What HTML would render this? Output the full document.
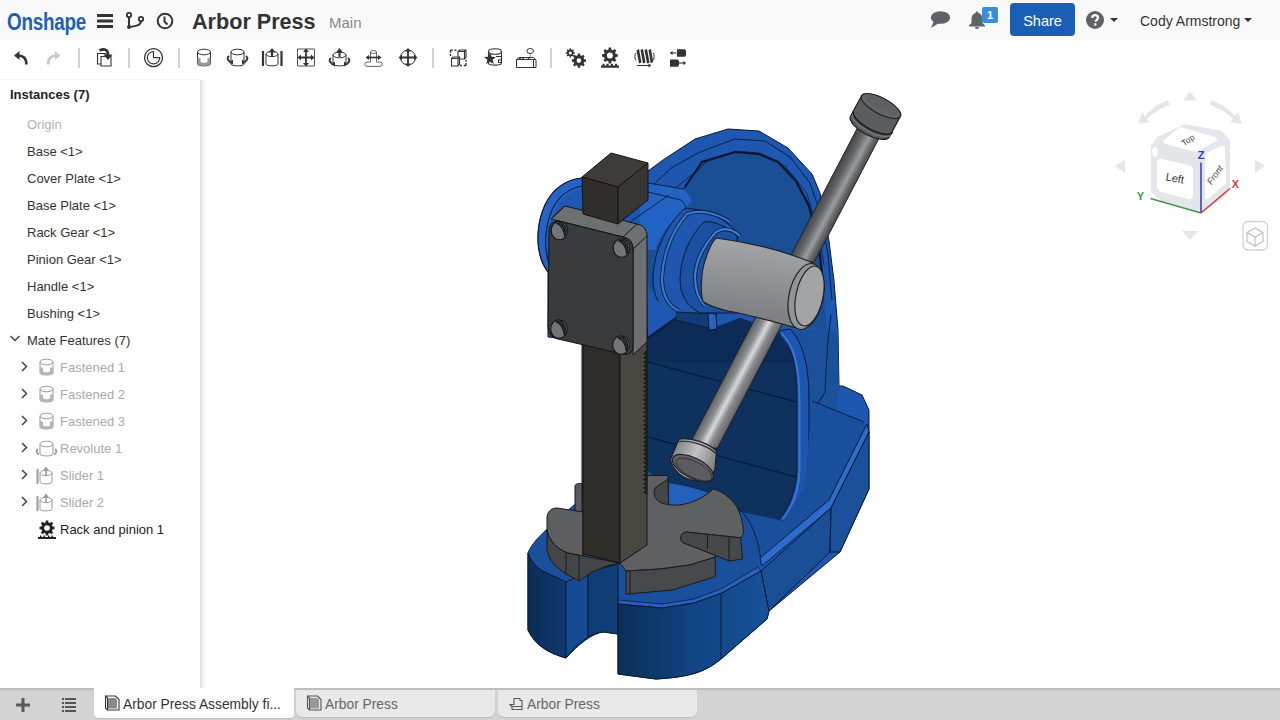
<!DOCTYPE html>
<html><head><meta charset="utf-8">
<style>
*{margin:0;padding:0;box-sizing:border-box}
html,body{width:1280px;height:720px;overflow:hidden;background:#fff;font-family:"Liberation Sans",sans-serif;color:#333}
.abs{position:absolute}
#top{position:absolute;left:0;top:0;width:1280px;height:40px;background:#f9f9f9}
#tool{position:absolute;left:0;top:40px;width:1280px;height:38px;background:#fff}
#panel{position:absolute;left:0;top:79px;width:200px;height:609px;background:#fff;border-top:1px solid #f6f6f6}
#pshadow{position:absolute;left:200px;top:80px;width:7px;height:608px;background:linear-gradient(to right,rgba(0,0,0,.13),rgba(0,0,0,.04) 40%,rgba(0,0,0,0))}
#bottom{position:absolute;left:0;top:688px;width:1280px;height:32px;background:#d3d3d3;border-top:2px solid #bdbdbd}
.t{position:absolute;white-space:nowrap;font-size:13px;line-height:16px}
.sep{position:absolute;top:48px;width:2px;height:19px;background:#d6d6d6}
.tab{position:absolute;top:0;height:27px;border-radius:0 0 6px 6px;background:#e9e9e9;box-shadow:0 1px 1px rgba(0,0,0,.12)}
.tab.act{background:#fff}
</style></head><body>
<div id="top">
  <div class="t" style="left:7px;top:9px;font-size:23px;line-height:27px;font-weight:bold;color:#1f5fb5;transform:scaleX(0.82);transform-origin:0 0;letter-spacing:-0.3px">Onshape</div>
  <svg class="abs" style="left:97px;top:13px" width="16" height="16" viewBox="0 0 16 16"><rect x="0" y="1" width="16" height="3" fill="#333"/><rect x="0" y="6.5" width="16" height="3" fill="#333"/><rect x="0" y="12" width="16" height="3" fill="#333"/></svg>
  <svg class="abs" style="left:125px;top:12px" width="20" height="18" viewBox="0 0 20 18"><circle cx="4" cy="3" r="2.2" fill="none" stroke="#333" stroke-width="1.8"/><circle cx="4" cy="15" r="2" fill="#333"/><circle cx="16" cy="7" r="2.2" fill="none" stroke="#333" stroke-width="1.8"/><path d="M4 5v10M16 9c0 4-4 5-12 6" fill="none" stroke="#333" stroke-width="2"/></svg>
  <svg class="abs" style="left:156px;top:12px" width="18" height="18" viewBox="0 0 18 18"><circle cx="9" cy="9" r="7.3" fill="none" stroke="#333" stroke-width="2"/><path d="M8.5 4.5v5l3 3" fill="none" stroke="#333" stroke-width="2"/></svg>
  <div class="t" style="left:192px;top:8.5px;font-size:21.6px;line-height:26px;font-weight:bold;color:#333">Arbor Press</div>
  <div class="t" style="left:329px;top:14px;font-size:15px;line-height:18px;color:#888">Main</div>
  <svg class="abs" style="left:930px;top:11px" width="21" height="18" viewBox="0 0 21 18"><ellipse cx="10.5" cy="6.5" rx="9.7" ry="6.3" fill="#5f6368"/><path d="M4 10L1 17l8-5z" fill="#5f6368"/></svg>
  <svg class="abs" style="left:968px;top:11px" width="18" height="18" viewBox="0 0 18 18"><path d="M9 0.5c1 0 1.3.7 1.3 1.5 3 .7 4.2 3 4.2 6v4l2.5 2.6v1H1v-1l2.5-2.6v-4c0-3 1.2-5.3 4.2-6 0-.8.3-1.5 1.3-1.5z" fill="#5f6368"/><path d="M7 16h4a2 2 0 0 1-4 0z" fill="#5f6368"/></svg>
  <div class="abs" style="left:982px;top:7px;width:16px;height:16px;background:#3a8ddb;border-radius:2px;color:#fff;font-size:11px;font-weight:bold;text-align:center;line-height:16px">1</div>
  <div class="abs" style="left:1010px;top:3px;width:65px;height:33px;background:#1a5fb7;border-radius:4px;color:#fff;font-size:14.5px;text-align:center;line-height:36px">Share</div>
  <svg class="abs" style="left:1086px;top:11px" width="18" height="18" viewBox="0 0 18 18"><circle cx="9" cy="9" r="9" fill="#5f6368"/><path d="M6.2 7c0-1.8 1.2-2.8 2.9-2.8S12 5.2 12 6.8c0 2.1-2.3 2.1-2.3 4" fill="none" stroke="#fff" stroke-width="2.2"/><rect x="8.1" y="12.3" width="2.3" height="2.3" fill="#fff"/></svg>
  <svg class="abs" style="left:1110px;top:18px" width="8" height="4" viewBox="0 0 8 4"><path d="M0 0h8L4 4z" fill="#333"/></svg>
  <div class="t" style="left:1140px;top:12.5px;font-size:14px;line-height:17px;color:#333">Cody Armstrong</div>
  <svg class="abs" style="left:1244px;top:18px" width="8" height="4" viewBox="0 0 8 4"><path d="M0 0h8L4 4z" fill="#333"/></svg>
</div>
<div id="tool">
<svg class="abs" style="left:0;top:0" width="700" height="38" viewBox="0 40 700 38">
<g fill="none" stroke="#333" stroke-width="1.2">
<path d="M14 55.5l5.5-4.5v9z" fill="#333" stroke="none"/>
<path d="M18 55.5c5 0 8.5 2.5 8.5 9" stroke-width="2.6"/>
<path d="M60.5 55.5l-5.5-4.5v9z" fill="#c9c9c9" stroke="none"/>
<path d="M56.5 55.5c-5 0-8.5 2.5-8.5 9" stroke="#c9c9c9" stroke-width="2.6"/>
<path d="M97.5 53.5h8.5v10.5h-8.5z" stroke-width="1.1"/>
<path d="M101 56.5h10v9.5h-10z" fill="#fff" stroke-width="1.1"/>
<path d="M99.5 50.5c5-2.5 9-0.5 8.5 4.5" stroke-width="2.6"/><path d="M103.5 54.5h9l-4.5 5.5z" fill="#333" stroke="none"/>
<circle cx="153.5" cy="57.7" r="9" stroke-width="1.3"/>
<path d="M153.5 51.5a6.2 6.2 0 1 0 6.2 6.2h-6.2z" stroke-width="1.2"/>
<g stroke-width="1"><path d="M197.5 52v12c0 2.5 13 2.5 13 0v-12"/><ellipse cx="204" cy="52" rx="6.5" ry="2.8"/></g>
<path d="M197.5 57.5c2 1 3 .5 3 .5v4c0 1 7 1 7 0v-4s1 .5 3-.5v6.5c0 2.5-13 2.5-13 0z" fill="#999" stroke="none"/>
<g stroke-width="1"><path d="M231 52v12c0 2.5 13 2.5 13 0v-12"/><ellipse cx="237.5" cy="52" rx="6.5" ry="2.8"/></g>
<path d="M229 56c-2 1.5-2 4 1 5.5M246 56c2 1.5 2 4-1 5.5" stroke-width="2"/><path d="M233 59.5l-4 3 4 2zM242 59.5l4 3-4 2z" fill="#333" stroke="none"/>
<g stroke-width="1"><path d="M266 54v10c0 2.5 12 2.5 12 0v-10"/><ellipse cx="272" cy="54" rx="6" ry="2.6"/></g>
<path d="M263 51v15M281.5 51v15" stroke-width="2.2"/><path d="M272 57v-5" stroke-width="2"/><path d="M268.5 52.5l3.5-4.5 3.5 4.5z" fill="#333" stroke="none"/>
<path d="M297.5 49h17v17h-17z" stroke-width="1" stroke="#555"/>
<path d="M306 51v13M299.5 57.5h13" stroke-width="1.8"/><path d="M303 52l3-3.5 3 3.5zM303 63l3 3.5 3-3.5zM301 54.5l-3.5 3 3.5 3zM311 54.5l3.5 3-3.5 3z" fill="#333" stroke="none"/>
<g stroke-width="1"><path d="M333 55v9c0 2.5 13 2.5 13 0v-9"/><ellipse cx="339.5" cy="55" rx="6.5" ry="2.8"/></g>
<path d="M339.5 57v-5" stroke-width="2"/><path d="M336 52.5l3.5-4.5 3.5 4.5z" fill="#333" stroke="none"/>
<path d="M331 58c-2 1.5-2 4 1 5.5M348 58c2 1.5 2 4-1 5.5" stroke-width="2"/><path d="M335 61.5l-4 3 4 2zM344 61.5l4 3-4 2z" fill="#333" stroke="none"/>
<g stroke-width="0.9" stroke="#555"><path d="M370.5 52v10M376.5 52v10"/><ellipse cx="373.5" cy="52" rx="3" ry="1.5"/><path d="M370.5 62h-3.5a2.2 2.2 0 0 0 0 4.4h13a2.2 2.2 0 0 0 0-4.4h-3.5"/></g>
<path d="M367.5 57.5h12" stroke-width="1.7"/><path d="M369 55l-3.5 2.5 3.5 2.5zM378 55l3.5 2.5-3.5 2.5z" fill="#333" stroke="none"/>
<circle cx="408" cy="57.5" r="7.5" stroke-width="1"/>
<path d="M408 50v15M400.5 57.5h15" stroke-width="1.8"/><path d="M405 51.5l3-3.5 3 3.5zM405 63.5l3 3.5 3-3.5zM402 54.5l-3.5 3 3.5 3zM414 54.5l3.5 3-3.5 3z" fill="#333" stroke="none"/>
<g stroke-width="1.1">
<path d="M458 51.5l1.5-1.5h6.5v7.5l-1.5 1.5h-6.5z M458 51.5h6.5v7.5M464.5 51.5l1.5-1.5"/>
<path d="M451.5 58.5l1.5-1.5h6.5v7.5l-1.5 1.5h-6.5z" fill="#fff"/><path d="M451.5 58.5h6.5v7.5M458 58.5l1.5-1.5"/>
</g>
<path d="M450.5 50.3h2.2M454.5 50.3h2M450.5 50.3v2.5M450.5 54v2M466 65.5h-2.2M462 65.5h-2M466 65.5v-2.5M466 61.8v-2" stroke-width="1.4"/>
<g stroke-width="1.1"><path d="M488.5 51.5v11.5c0 2.8 13 2.8 13 0v-11.5"/><ellipse cx="495" cy="51.5" rx="6.5" ry="2.8"/></g>
<path d="M496 56.5h5.5v3.5h-3v2.5h3" stroke-width="1.1"/>
<path d="M490 52.8l1.7 4 4.3.2-3.3 2.8 1.1 4.2-3.8-2.3-3.8 2.3 1.1-4.2-3.3-2.8 4.3-.2z" fill="#333" stroke="none"/>
<g stroke-width="1"><path d="M516.5 59.5l2.5-2h14.5l2.5 2.5v7.5h-19.5z M516.5 59.5h17l2.5 0M533.5 59.5v8"/><ellipse cx="530.2" cy="51" rx="3.3" ry="2.5"/></g>
<path d="M530.2 53.5v4" stroke-width="1" stroke-dasharray="1 1"/><path d="M520 59v-2M523 59v-2M528.5 59v-1.5" stroke-width="1.6"/>
</g>
<g fill="#333">
<path fill-rule="evenodd" d="M569.04 49.85 L569.48 49.70 L569.58 48.36 L571.02 48.36 L571.12 49.70 L571.56 49.85 L571.98 50.06 L573.00 49.18 L574.02 50.20 L573.14 51.22 L573.35 51.64 L573.50 52.08 L574.84 52.18 L574.84 53.62 L573.50 53.72 L573.35 54.16 L573.14 54.58 L574.02 55.60 L573.00 56.62 L571.98 55.74 L571.56 55.95 L571.12 56.10 L571.02 57.44 L569.58 57.44 L569.48 56.10 L569.04 55.95 L568.62 55.74 L567.60 56.62 L566.58 55.60 L567.46 54.58 L567.25 54.16 L567.10 53.72 L565.76 53.62 L565.76 52.18 L567.10 52.08 L567.25 51.64 L567.46 51.22 L566.58 50.20 L567.60 49.18 L568.62 50.06Z M571.80 52.90 A1.5 1.5 0 1 0 568.80 52.90 A1.5 1.5 0 1 0 571.80 52.90Z"/>
<path fill-rule="evenodd" d="M576.83 55.61 L577.56 55.37 L577.77 53.49 L580.03 53.49 L580.24 55.37 L580.97 55.61 L581.65 55.95 L583.13 54.78 L584.72 56.37 L583.55 57.85 L583.89 58.53 L584.13 59.26 L586.01 59.47 L586.01 61.73 L584.13 61.94 L583.89 62.67 L583.55 63.35 L584.72 64.83 L583.13 66.42 L581.65 65.25 L580.97 65.59 L580.24 65.83 L580.03 67.71 L577.77 67.71 L577.56 65.83 L576.83 65.59 L576.15 65.25 L574.67 66.42 L573.08 64.83 L574.25 63.35 L573.91 62.67 L573.67 61.94 L571.79 61.73 L571.79 59.47 L573.67 59.26 L573.91 58.53 L574.25 57.85 L573.08 56.37 L574.67 54.78 L576.15 55.95Z M581.20 60.60 A2.3 2.3 0 1 0 576.60 60.60 A2.3 2.3 0 1 0 581.20 60.60Z"/>
<path fill-rule="evenodd" d="M607.60 49.96 L608.41 49.69 L608.65 47.60 L611.15 47.60 L611.39 49.69 L612.20 49.96 L612.95 50.34 L614.60 49.03 L616.37 50.80 L615.06 52.45 L615.44 53.20 L615.71 54.01 L617.80 54.25 L617.80 56.75 L615.71 56.99 L615.44 57.80 L615.06 58.55 L616.37 60.20 L614.60 61.97 L612.95 60.66 L612.20 61.04 L611.39 61.31 L611.15 63.40 L608.65 63.40 L608.41 61.31 L607.60 61.04 L606.85 60.66 L605.20 61.97 L603.43 60.20 L604.74 58.55 L604.36 57.80 L604.09 56.99 L602.00 56.75 L602.00 54.25 L604.09 54.01 L604.36 53.20 L604.74 52.45 L603.43 50.80 L605.20 49.03 L606.85 50.34Z M612.90 55.50 A3.0 3.0 0 1 0 606.90 55.50 A3.0 3.0 0 1 0 612.90 55.50Z"/>
<path d="M601 65.5h18v2.2h-18zM602.5 63.8h2v2h-2zM606.5 63.8h2v2h-2zM611 63.8h2v2h-2zM615 63.8h2v2h-2z"/>
<path d="M636.5 50.5l2.5-1.5 2.5 13.5-2.5 1zM640.5 50l2.5-1 2.5 13.5-2.5 1zM644.5 50l2.5-1 2.5 13.5-2.5 1zM648.5 50l2.5-1 2.2 13-2.5 1.2z"/>
<path d="M636 53c-1.5 1-1.5 6 0 7.5M653 53c1.5 1 1.5 6 0 7.5" fill="none" stroke="#333" stroke-width="1"/>
<path d="M637 65.5h12" stroke="#333" stroke-width="1.1"/><path d="M648.5 63.3l2.7 2.2-2.7 2.2z"/>
<path d="M677 49.2h7.5a1.6 3.8 0 0 1 0 7.6h-7.5z"/><path d="M670.5 53h6" stroke="#333" stroke-width="1.1"/><path d="M672.5 50.8l-2.5 2.2 2.5 2.2z"/>
<path d="M670 59.5h7.5a1.6 3.6 0 0 1 0 7.2h-7.5z"/><path d="M679 63h5" stroke="#333" stroke-width="1.1"/><path d="M683.5 60.8l2.5 2.2-2.5 2.2z"/>
</g>
<g fill="#d2d2d2"><rect x="78" y="48" width="2" height="20"/><rect x="128" y="48" width="2" height="20"/><rect x="178" y="48" width="2" height="20"/><rect x="432" y="48" width="2" height="20"/><rect x="550" y="48" width="2" height="20"/></g>
</svg>
</div>
<div id="pshadow"></div>
<div id="panel">
<div class="t" style="left:10px;top:7px;font-weight:bold;color:#222">Instances (7)</div>
<div class="t" style="left:27px;top:37px;color:#b3b3b3">Origin</div>
<div class="t" style="left:27px;top:64px">Base &lt;1&gt;</div>
<div class="t" style="left:27px;top:91px">Cover Plate &lt;1&gt;</div>
<div class="t" style="left:27px;top:118px">Base Plate &lt;1&gt;</div>
<div class="t" style="left:27px;top:145px">Rack Gear &lt;1&gt;</div>
<div class="t" style="left:27px;top:172px">Pinion Gear &lt;1&gt;</div>
<div class="t" style="left:27px;top:199px">Handle &lt;1&gt;</div>
<div class="t" style="left:27px;top:226px">Bushing &lt;1&gt;</div>
<div class="t" style="left:27px;top:253px">Mate Features (7)</div>
<div class="t" style="left:60px;top:280px;color:#aaa">Fastened 1</div>
<div class="t" style="left:60px;top:307px;color:#aaa">Fastened 2</div>
<div class="t" style="left:60px;top:334px;color:#aaa">Fastened 3</div>
<div class="t" style="left:60px;top:361px;color:#aaa">Revolute 1</div>
<div class="t" style="left:60px;top:388px;color:#aaa">Slider 1</div>
<div class="t" style="left:60px;top:415px;color:#aaa">Slider 2</div>
<div class="t" style="left:60px;top:442px;color:#222">Rack and pinion 1</div>
<svg class="abs" style="left:0;top:0" width="200" height="460" viewBox="0 79 200 460">
<path d="M10.5 335l4.5 4.5 4.5-4.5" fill="none" stroke="#444" stroke-width="1.5"/>
<g fill="none" stroke="#444" stroke-width="1.5">
<path d="M22 361l4.5 4.5-4.5 4.5M22 388l4.5 4.5-4.5 4.5M22 415l4.5 4.5-4.5 4.5M22 442l4.5 4.5-4.5 4.5M22 469l4.5 4.5-4.5 4.5M22 496l4.5 4.5-4.5 4.5"/>
</g>
<g fill="none" stroke="#9a9a9a" stroke-width="1">
<g id="fz"><path d="M40 361v11c0 2.6 13 2.6 13 0v-11"/><ellipse cx="46.5" cy="361" rx="6.5" ry="2.8"/><path d="M40 366c2 1 3 .5 3 .5v4c0 1 7 1 7 0v-4s1 .5 3-.5v6c0 2.6-13 2.6-13 0z" fill="#b4b4b4" stroke="none"/></g>
<use href="#fz" y="27"/><use href="#fz" y="54"/>
<path d="M40 443v10c0 2.6 13 2.6 13 0v-10"/><ellipse cx="46.5" cy="443" rx="6.5" ry="2.8"/>
<path d="M38 448c-2 1.5-2 4 1 5.5M55 448c2 1.5 2 4-1 5.5" stroke-width="1.8"/>
<g id="sl"><path d="M40 472v9c0 2.5 12 2.5 12 0v-9"/><ellipse cx="46" cy="472" rx="6" ry="2.6"/><path d="M37.5 468v15" stroke-width="2"/><path d="M46 475v-6" stroke-width="1.6"/><path d="M43 469.5l3-4 3 4z" fill="#9a9a9a" stroke="none"/></g>
<use href="#sl" y="27"/>
</g>
<g fill="#222">
<path fill-rule="evenodd" d="M44.82 521.73 L45.58 521.48 L45.81 519.49 L48.19 519.49 L48.42 521.48 L49.18 521.73 L49.90 522.09 L51.47 520.85 L53.15 522.53 L51.91 524.10 L52.27 524.82 L52.52 525.58 L54.51 525.81 L54.51 528.19 L52.52 528.42 L52.27 529.18 L51.91 529.90 L53.15 531.47 L51.47 533.15 L49.90 531.91 L49.18 532.27 L48.42 532.52 L48.19 534.51 L45.81 534.51 L45.58 532.52 L44.82 532.27 L44.10 531.91 L42.53 533.15 L40.85 531.47 L42.09 529.90 L41.73 529.18 L41.48 528.42 L39.49 528.19 L39.49 525.81 L41.48 525.58 L41.73 524.82 L42.09 524.10 L40.85 522.53 L42.53 520.85 L44.10 522.09Z M49.80 527.00 A2.8 2.8 0 1 0 44.20 527.00 A2.8 2.8 0 1 0 49.80 527.00Z"/>
<path d="M38 536h18v2h-18zM40 534.5h1.5v2h-1.5zM43.5 534.5h1.5v2h-1.5zM48 534.5h1.5v2h-1.5zM51.5 534.5h1.5v2h-1.5z"/>
</g>
</svg>
</div>
<div id="bottom">
<svg class="abs" style="left:0;top:-2px" width="90" height="32" viewBox="0 688 90 32">
<path d="M23 698v14M16 705h14" stroke="#5a5a5a" stroke-width="3"/>
<g fill="#555"><rect x="62" y="698" width="2" height="2"/><rect x="62" y="702" width="2" height="2"/><rect x="62" y="706" width="2" height="2"/><rect x="62" y="710" width="2" height="2"/><rect x="65" y="698" width="11" height="2"/><rect x="65" y="702" width="11" height="2"/><rect x="65" y="706" width="11" height="2"/><rect x="65" y="710" width="11" height="2"/></g>
</svg>
<div class="tab act" style="left:94px;width:200px;top:-2px;height:30px;border-radius:0 0 4px 4px"></div>
<div class="tab" style="left:296px;width:199px;top:0px"></div>
<div class="tab" style="left:498px;width:199px;top:0px"></div>
<svg class="abs" style="left:0;top:-2px" width="720" height="32" viewBox="0 688 720 32">
<g fill="none" stroke="#333" stroke-width="1.1">
<path d="M105.5 696h10l3.5 3.5v10.5h-11.5l-2-2z"/><path d="M105.5 696l2 2v12"/>
</g><path d="M108 698h7.5l1.5 1.5v9h-9z" fill="#888"/>
<g fill="none" stroke="#555" stroke-width="1.1">
<path d="M307.5 696h10l3.5 3.5v10.5h-11.5l-2-2z"/><path d="M307.5 696l2 2v12"/>
</g><path d="M310 698h7.5l1.5 1.5v9h-9z" fill="#999"/>
<g fill="none" stroke="#555" stroke-width="1.1">
<path d="M510 704.5h4v-6h6v2h2v6h-10z M510 704.5l2 2v3h10v-3"/>
</g>
</svg>
<div class="t" style="left:123px;top:7px;font-size:13.8px;color:#333">Arbor Press Assembly fi...</div>
<div class="t" style="left:325px;top:7px;font-size:13.8px;color:#666">Arbor Press</div>
<div class="t" style="left:527px;top:7px;font-size:13.8px;color:#666">Arbor Press</div>
</div>
<svg class="abs" style="left:0;top:0" width="1280" height="720" viewBox="0 0 1280 720">
<defs>
<linearGradient id="gShaft" gradientUnits="userSpaceOnUse" x1="760" y1="246" x2="752" y2="312"><stop offset="0" stop-color="#a2a3a5"/><stop offset="0.45" stop-color="#939496"/><stop offset="1" stop-color="#808183"/></linearGradient>
<linearGradient id="gRodU" gradientUnits="userSpaceOnUse" x1="825" y1="190" x2="846.2" y2="201.3"><stop offset="0" stop-color="#45474b"/><stop offset="0.3" stop-color="#626468"/><stop offset="0.6" stop-color="#9a9ca0"/><stop offset="0.8" stop-color="#686a6e"/><stop offset="1" stop-color="#47494d"/></linearGradient>
<linearGradient id="gRodL" gradientUnits="userSpaceOnUse" x1="722.6" y1="380" x2="747.1" y2="393"><stop offset="0" stop-color="#5e5f62"/><stop offset="0.3" stop-color="#8d8e91"/><stop offset="0.5" stop-color="#d8d9db"/><stop offset="0.7" stop-color="#8a8b8e"/><stop offset="1" stop-color="#606164"/></linearGradient>
<linearGradient id="gFront" x1="0" y1="0" x2="1" y2="0"><stop offset="0" stop-color="#0c2e58"/><stop offset="0.5" stop-color="#114482"/><stop offset="1" stop-color="#17529a"/></linearGradient>
<linearGradient id="gLobe" x1="0" y1="0" x2="1" y2="0"><stop offset="0" stop-color="#0b2b55"/><stop offset="1" stop-color="#0f3a72"/></linearGradient>
<linearGradient id="gKnob" gradientUnits="userSpaceOnUse" x1="672" y1="440" x2="716" y2="462"><stop offset="0" stop-color="#6f7073"/><stop offset="0.55" stop-color="#c2c3c5"/><stop offset="1" stop-color="#808184"/></linearGradient>
</defs>
<g stroke="#0a1a33" stroke-width="1" stroke-linejoin="round">
<!-- upright + base silhouette -->
<path d="M548 272C545 268 542 263 540 255C536 240 538 220 545 205C552 190 565 180 582 178L640 182L648 171L663 160L695 139L728 129L759 131L788 148L812 174L820 193L829 241L834 281L838 330L839 386L843 386L862 395L869 410L869 489L840 552L769 611L767 619L721 659C705 672 690 677 656 679L618 674L618 634L604 632C592 633 578 645 566 658C548 653 535 645 528 630L528 553C533 540 548 528 574 505L582 500L582 340L548 337Z" fill="#1e57b0"/>
</g>
<!-- arch rim lines -->
<path d="M650 188L671 168L700 152L735 139L765 141L790 157L810 183L821 215L828 255L832 300" fill="none" stroke="#0b1f40" stroke-width="1"/>
<path d="M664 198L690 176L712 164L735 151L760 153L785 166L806 192L817 225L824 265" fill="none" stroke="#0b1f40" stroke-width="0.8"/>
<!-- recess face -->
<path d="M640 230L660 205L685 187L702 162L735 152L759 154L778 162L796 181L809 206L818 240L824 290L826 330L790 325L740 312L700 300L650 290Z" fill="#1a4e95"/>
<path d="M685 187L702 162L735 152L759 154L778 162L796 181L809 206L818 240L824 290" fill="none" stroke="#07152c" stroke-width="2.2"/>
<!-- boss cylinder top-left of collar -->
<path d="M640 186L648 183L684 189L692 200L684 210C670 222 660 236 655 250L640 250Z" fill="#2363c4"/>
<path d="M648 183L684 189M648 192L681 200M630 222L669 195M684 189C690 178 700 168 708 160M681 200C684 203 686 206 686 209" fill="none" stroke="#0b1f40" stroke-width="1"/>
<!-- left boss flange -->
<path d="M582 178C565 180 552 190 545 205C538 220 536 240 540 255C542 263 545 268 548 272L560 250L583 200Z" fill="#2563c4"/>
<path d="M582 178C565 180 552 190 545 205C538 220 536 240 540 255C542 263 545 268 548 272" fill="none" stroke="#0a1a33" stroke-width="1.2"/>
<path d="M583 186C569 188 558 197 552 210C546 224 544 242 547 256C548 261 549 264 550 266" fill="none" stroke="#0b1f40" stroke-width="1.2"/>
<path d="M583 188C570 190 560 199 554 212C549 225 547 242 550 256L560 250L583 200Z" fill="#1f58b2"/>
<!-- lower web dark face -->
<path d="M647 296L676 311L716 327L740 318L778 331L793 353L800 391L804 440L805 480L790 515L783 521L760 516L740 512L700 500L667 490L647 470Z" fill="#0e315e"/>
<path d="M647 300L676 311L716 327L740 318L778 331L793 353L800 362L647 362Z" fill="#0c2c57"/>
<path d="M648 362L800 403M648 437L800 478M649 338L676 319L713 327" stroke="#06152f" stroke-width="1" fill="none"/>
<!-- arch leg face + slot fillet -->
<path d="M782 330C797 345 802 365 804 400L806 480C810 488 818 492 831 492L839 386L838 330L826 330Z" fill="#1b509a"/>
<path d="M778 331C793 345 797 366 797 400L797 470C796 490 790 508 778 521L790 521C800 510 806 495 809 480L823 493L826 488C815 482 809 476 809 468L809 400C809 366 803 342 790 329Z" fill="#1d56ae" stroke="#07183a" stroke-width="1"/>
<path d="M781 333C795 347 799 367 799.5 400L799.5 470C799 488 794 505 783 519" fill="none" stroke="#3878d4" stroke-width="2"/>
<path d="M831 315C827 345 826 370 825 392L812 413" fill="none" stroke="#0b1f40" stroke-width="1"/>
<!-- base top surface -->
<path d="M740 512L760 516L783 521L805 485L812 401L864 422L869 430L830 502L760 566L721 589L694 599L662 604L618 600L588 572L566 582L545 572L528 553C533 540 548 528 574 505L600 490L647 470L667 490L700 500Z" fill="#1a4f9b"/>
<path d="M669 483C690 486 715 493 736 506C750 518 758 535 761 562" fill="none" stroke="#0b1f40" stroke-width="1"/>
<path d="M669 483C690 486 715 493 736 506L742 522L700 508L669 505Z" fill="#2160bb"/>
<path d="M812 401L864 422" stroke="#0b1f40" stroke-width="1"/>
<!-- base fillet strip -->
<path d="M867 424L829 500L760 558L762 566L831 508L869 432Z" fill="#2d6bcc" stroke="#0b1f40" stroke-width="1"/>
<path d="M618 600L662 604L694 599L721 589L758 567L761 571L722 593L694 603L662 608L618 604Z" fill="#2660c0" stroke="#0b1f40" stroke-width="0.8"/>
<!-- base front faces -->
<g stroke="#0a1a33" stroke-width="1" stroke-linejoin="round">
<path d="M528 553C532 563 540 570 545 572L566 582L566 658C548 653 535 645 528 630Z" fill="url(#gLobe)"/>
<path d="M566 582L588 572L588 637C580 642 572 650 566 658Z" fill="#144b92"/>
<path d="M588 572L618 564L618 634L604 632C598 632 592 634 588 637Z" fill="#0f3d76"/>
<path d="M618 604L662 608L694 603L722 593L761 571L769 611L767 619L721 659C705 672 690 677 656 679L618 674Z" fill="url(#gFront)"/>
<path d="M721 593L721 659" fill="none"/>
<path d="M761 571L831 508L830 552L769 611Z" fill="#1a4e95"/>
<path d="M831 508L869 432L869 489L840 552L830 552Z" fill="#1b519a"/>
</g>
<!-- shaft collar -->
<g stroke="#0a1a33" stroke-width="1">
<path d="M675 314C660 310 653 296 653 280C653 255 664 228 684 209C700 207 722 216 737 232L740 300L716 300L716 314Z" fill="#1f57b0"/>
<path d="M700 313C686 306 680 294 680 278C681 256 690 236 704 222C715 220 728 228 737 236L740 313Z" fill="#1b50a2"/>
<path d="M679 311C667 305 662 293 662 278C663 256 671 232 687 214C700 209 716 213 730 222" fill="none" stroke="#0b1f40" stroke-width="4"/>
<path d="M679 311C667 305 662 293 662 278C663 256 671 232 687 214C700 209 716 213 730 222" fill="none" stroke="#3a78d0" stroke-width="2.2"/>
<path d="M705 306C698 299 695 288 695 276C696 262 703 246 716 232C724 227 732 229 740 236" fill="none" stroke="#0b1f40" stroke-width="4"/>
<path d="M705 306C698 299 695 288 695 276C696 262 703 246 716 232C724 227 732 229 740 236" fill="none" stroke="#3f7ed6" stroke-width="2.2"/>
<path d="M676 312L716 314L716 330L676 320Z" fill="#123c78"/>
<path d="M708 313L716 314L717 329L709 330Z" fill="#2a64c0"/>
<path d="M647 286L656 300L676 313L676 317L648 337Z" fill="#1f58b2" stroke="none"/>
<path d="M648 337L676 317" fill="none"/>
</g>
<!-- rods -->
<path d="M857.9 127L884.9 127L814.4 262L787.4 262Z" fill="url(#gRodU)" stroke="#222" stroke-width="1"/>
<path d="M759.5 310L789.5 310L717.5 448L687.5 448Z" fill="url(#gRodL)" stroke="#222" stroke-width="1"/>
<!-- shaft -->
<path d="M716 238Q770 245 813 263L800 329C785 325 760 317 728 311C715 308 708 305 703 301.5C700 292 701 270 706 258C709 248 712 242 716 238Z" fill="url(#gShaft)" stroke="#1e1e20" stroke-width="1.1"/>

<ellipse cx="806" cy="296.5" rx="17" ry="33.5" fill="#939496" stroke="#1e1e20" stroke-width="1.2" transform="rotate(12 806 296.5)"/>
<ellipse cx="809.5" cy="296" rx="13.5" ry="30.5" fill="#a3a4a6" stroke="#1e1e20" stroke-width="1.1" transform="rotate(12 809.5 296)"/>
<!-- top knob -->
<path d="M861.6 95.7A22 8 28 0 1 900.4 116.3L889.1 137.4A22 8.5 28 0 1 850.3 116.8Z" fill="#5a5c60" stroke="#1e1e20" stroke-width="1.2"/>
<ellipse cx="881" cy="106" rx="22" ry="8" transform="rotate(28 881 106)" fill="#64666a" stroke="#1e1e20" stroke-width="1.1"/>
<ellipse cx="882" cy="104.5" rx="18" ry="5.5" transform="rotate(28 882 104.5)" fill="#5e6064" stroke="none"/>
<path d="M853.5 111.5A22 8 28 0 0 892.5 132" fill="none" stroke="#1e1e20" stroke-width="1.6"/>
<path d="M852.5 114A22 8 28 0 0 891.5 134.5" fill="none" stroke="#808286" stroke-width="1"/>
<!-- lower knob -->
<path d="M679 439C692 437 710 444 716.5 451L715 469C713 477 705 481 697 481C685 480 672 471 670.5 459L679 439Z" fill="url(#gKnob)" stroke="#1e1e20" stroke-width="1.2"/>
<path d="M679 441.5C692 440 708 446 716 453.5" fill="none" stroke="#2a2a2c" stroke-width="1.2"/>
<ellipse cx="693" cy="468" rx="22.5" ry="10" fill="#626366" stroke="#1e1e20" stroke-width="1.2" transform="rotate(27 693 468)"/>
<ellipse cx="694" cy="469.5" rx="20" ry="8" fill="#5b5c5f" stroke="#2a2b2d" stroke-width="0.8" transform="rotate(27 694 469.5)"/>
<!-- base plate -->
<g stroke="#1a1a1a" stroke-width="1" stroke-linejoin="round">
<path d="M575 486C575 483 582 483 582 484L582 515L575 513Z" fill="#58595b"/>
<path d="M547 518C547 512 551 508 557 508L583 512L583 556L568 553C557 549 549 541 547 530Z" fill="#5e5f61"/>
<path d="M547 530C549 541 557 549 568 553L583 556L620 563L607 566L592 572L579 581L566 574C556 568 549 560 547 550Z" fill="#444547"/>
<path d="M566 553L566 574M579 556L579 581" fill="none"/>
<path d="M646 475.5L668 475.5L668.6 504.7C680 507 700 502 713 489C722 491 731 498 737 507C741 515 743.5 525 743.5 534L740.6 537.8L686 532C680 533 679 541 684 543L715.3 555.3L715.3 557L690 565L660 569L626 571L620 563L646 545Z" fill="#5f6062"/>
<path d="M655 488C652 496 656 503 668.6 504.7L668 479Z" fill="#454648"/>
<path d="M626 571L660 569L690 565L715.3 557L715.3 576.7L672 590L626 594.2Z" fill="#48494b"/>
<path d="M630 571L630 594" fill="none"/>
<path d="M686 532L740.6 537.8L742.6 559L729 561L715.3 555.3L684 543C679 541 680 533 686 532Z" fill="#47484a"/>
<path d="M707.5 534.5L707.5 549M729 537L729 561" fill="none"/>
</g>
<!-- rack -->
<g stroke="#151412" stroke-width="1">
<path d="M583 340L620 348L620 563L583 554Z" fill="#2f2d2a"/>
<path d="M620 348L647 335L647 545L620 563Z" fill="#484742"/>
<path d="M647 350 L643.5 353.5 L647 355.5 L643.5 357.7 L647 359.7 L643.5 361.9 L647 363.9 L643.5 366.1 L647 368.1 L643.5 370.3 L647 372.3 L643.5 374.5 L647 376.5 L643.5 378.7 L647 380.7 L643.5 382.9 L647 384.9 L643.5 387.1 L647 389.1 L643.5 391.3 L647 393.3 L643.5 395.5 L647 397.5 L643.5 399.7 L647 401.7 L643.5 403.9 L647 405.9 L643.5 408.1 L647 410.1 L643.5 412.3 L647 414.3 L643.5 416.5 L647 418.5 L643.5 420.7 L647 422.7 L643.5 424.9 L647 426.9 L643.5 429.1 L647 431.1 L643.5 433.3 L647 435.3 L643.5 437.5 L647 439.5 L643.5 441.7 L647 443.7 L643.5 445.9 L647 447.9 L643.5 450.1 L647 452.1 L643.5 454.3 L647 456.3 L643.5 458.5 L647 460.5 L643.5 462.7 L647 464.7 L643.5 466.9 L647 468.9 L643.5 471.1 L647 473.1 L643.5 475.3 L647 477.3 L643.5 479.5 L647 481.5 L643.5 483.7 L647 485.7 L643.5 487.9 L647 489.9 L643.5 492.1 L647 494.1 L647 350Z" fill="#1c1b19" stroke="#1c1b19" stroke-width="0.8"/>
</g>
<!-- cover plate -->
<g stroke="#141414" stroke-width="1" stroke-linejoin="round">
<path d="M551 219L565 206L637 224Q647 226 647 236L647 342L633 355L633 249Q633 239 623 237Z" fill="#6e6f71"/>
<path d="M551 219L565 206M623 237L637 224M633 249L647 236" fill="none"/>
<path d="M559 221L623 237Q633 239 633 249L633 346Q633 356 623 354L558 339Q548 337 548 327L549 231Q549 221 559 221Z" fill="#3a3b3d"/>
<ellipse cx="559.5" cy="230.5" rx="8.3" ry="9.3" fill="#737476" stroke="#151515" stroke-width="1.1"/><path d="M560.5 222.2C566.5 224.5 567.5 232.5 564.5 236.5C564.5 231.5 561.5 225.5 556.5 223.5Z" fill="#2a2b2d"/><ellipse cx="621.5" cy="248" rx="8.3" ry="9.3" fill="#737476" stroke="#151515" stroke-width="1.1"/><path d="M622.5 239.7C628.5 242 629.5 250 626.5 254C626.5 249 623.5 243 618.5 241Z" fill="#2a2b2d"/><ellipse cx="559" cy="329" rx="8.3" ry="9.3" fill="#737476" stroke="#151515" stroke-width="1.1"/><path d="M560 320.7C566 323 567 331 564 335C564 330 561 324 556 322Z" fill="#2a2b2d"/><ellipse cx="621" cy="345" rx="8.3" ry="9.3" fill="#737476" stroke="#151515" stroke-width="1.1"/><path d="M622 336.7C628 339 629 347 626 351C626 346 623 340 618 338Z" fill="#2a2b2d"/>
</g>
<!-- top cube -->
<g stroke="#151412" stroke-width="1">
<path d="M582 177L611 153L648 163L618 187Z" fill="#3e3c38"/>
<path d="M582 177L618 187L618 224L583 214Z" fill="#302e2a"/>
<path d="M618 187L648 163L648 200L618 224Z" fill="#383632"/>
</g>
</svg>

<svg class="abs" style="left:1100px;top:80px" width="180" height="180" viewBox="1100 80 180 180">
<g fill="#e3e6ea">
<path d="M1190 91.5L1197 100.5L1183 100.5Z"/>
<path d="M1115 166L1125 159.5L1125 173Z"/>
<path d="M1265 166L1255 159.5L1255 173Z"/>
<path d="M1190 240L1182 231L1198 231Z"/>
<path d="M1168 100.5C1158 104 1150 110 1145 116L1142 112L1138 124L1150 122L1147 119C1152 114 1159 109 1170 105Z"/>
<path d="M1212 100.5C1222 104 1230 110 1235 116L1238 112L1242 124L1230 122L1233 119C1228 114 1221 109 1210 105Z"/>
<path d="M1185 124L1222 131L1230 141L1230 187L1224 198L1201 213L1161 201L1151 192L1151 146L1157 137Z"/>
</g>
<g fill="#fff">
<path d="M1182 127.5L1215 137Q1219 139 1216 141L1200 150Q1196 152 1192 151L1166 144Q1161 142 1165 139L1178 128Q1180 127 1182 127.5Z"/>
<path d="M1162 159L1188 165Q1193 166 1193 171L1193 195Q1193 200 1188 199L1162 192Q1157 191 1157 186L1157 164Q1157 158 1162 159Z"/>
<path d="M1208 152L1221 146Q1225 145 1225 149L1226 181Q1226 185 1222 187L1209 198Q1205 201 1205 196L1205 157Q1205 153 1208 152Z"/>
<ellipse cx="1155" cy="152" rx="3" ry="5"/>
</g>
<text x="1188" y="143" font-family="Liberation Sans" font-size="8.5" fill="#444" text-anchor="middle" transform="rotate(-35 1188 140)">Top</text>
<text x="1175" y="182" font-family="Liberation Sans" font-size="11" fill="#333" text-anchor="middle" transform="rotate(10 1175 178)">Left</text>
<text x="1215" y="178" font-family="Liberation Sans" font-size="9" font-style="italic" fill="#444" text-anchor="middle" transform="rotate(-55 1215 175)">Front</text>
<path d="M1201 162.5V213" stroke="#3f3fd0" stroke-width="1.6"/>
<path d="M1150.5 198.5L1201 213" stroke="#3d9b3d" stroke-width="1.6"/>
<path d="M1201 213L1230 188.5" stroke="#d43b3b" stroke-width="1.6"/>
<text x="1201" y="159" font-family="Liberation Sans" font-size="11" font-weight="bold" fill="#3a3ac8" text-anchor="middle">Z</text>
<text x="1140.5" y="200" font-family="Liberation Sans" font-size="11" font-weight="bold" fill="#3a9a3a" text-anchor="middle">Y</text>
<text x="1235.5" y="188" font-family="Liberation Sans" font-size="11" font-weight="bold" fill="#d43b3b" text-anchor="middle">X</text>
<rect x="1243" y="221.5" width="24.5" height="28.5" rx="5" fill="#fff" stroke="#cfd3d8" stroke-width="1.3"/>
<path d="M1255 228L1263 232.5V241.5L1255 246L1247 241.5V232.5Z M1247 232.5L1255 237L1263 232.5 M1255 237V246" fill="none" stroke="#b8bcc2" stroke-width="1.1"/>
</svg>

</body></html>
